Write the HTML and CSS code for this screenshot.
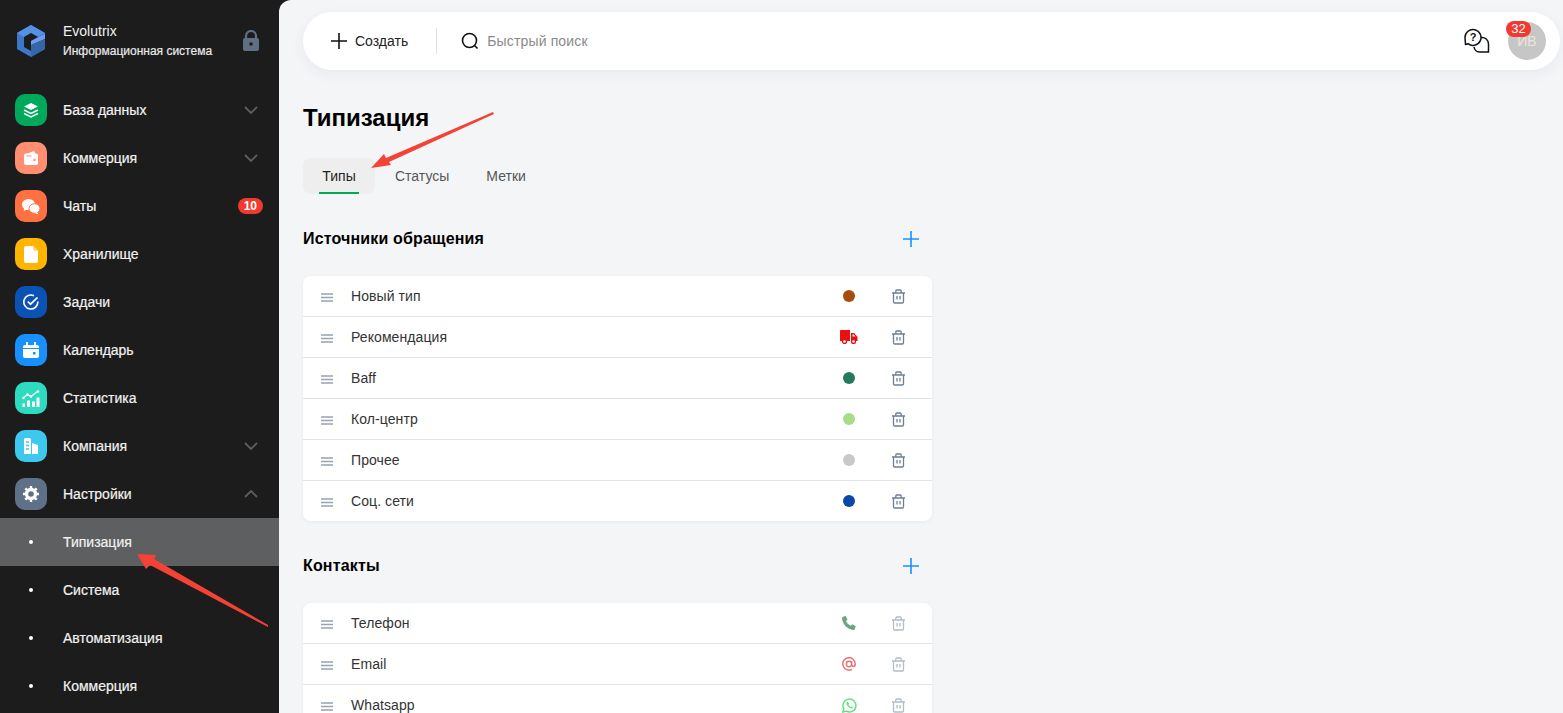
FILE: index.html
```html
<!DOCTYPE html>
<html lang="ru">
<head>
  <meta charset="UTF-8" />
  <meta name="viewport" content="width=device-width, initial-scale=1.0" />
  <title>Типизация</title>
  <link rel="stylesheet" href="styles.css">
</head>
<body>

<svg class="hidden-defs" width="0" height="0">
  <defs>
    <symbol id="i-drag" viewBox="0 0 12 9"><path d="M0 1h12M0 4.500h12M0 8h12" stroke="#98a2b3" stroke-width="1.3" fill="none"/></symbol>
    <symbol id="i-trash" viewBox="0 0 15 15"><path d="M1 4h13M2.500 4v8.800A1.200 1.200 0 0 0 3.700 14h7.600a1.200 1.200 0 0 0 1.200-1.200V4M4.800 4V2a1 1 0 0 1 1-1h3.400a1 1 0 0 1 1 1v2M6 7v3.500M9 7v3.500" stroke="currentColor" stroke-width="1.300" fill="none"/></symbol>
    <symbol id="i-plus" viewBox="0 0 16 16"><path d="M8 0v16M0 8h16" stroke="#1890ff" stroke-width="1.6" fill="none"/></symbol>
    <symbol id="i-down" viewBox="0 0 14 8"><path d="M1 1l6 6 6-6" stroke="#5e5e5e" stroke-width="1.800" fill="none"/></symbol>
  </defs>
</svg>

<div class="app">

  <!-- Sidebar -->
  <aside class="sidebar">
    <div class="brand">
      <svg class="brand-logo" width="30" height="34" viewBox="0 0 30 34">
        <path d="M15 1L29 9v16l-14 8L1 25V9z" fill="#3b78c9"/>
        <path d="M15 1L29 9 22 13 15 9 8 13 1 9z" fill="#5590e4"/>
        <path d="M8 13l7-4 7 4-7 4v4l14-7v5l-14 8-7-4z" fill="#1c1c1c"/>
        <path d="M15 17l14-7v5l-14 6z" fill="#6d9cf0"/>
        <path d="M15 21l14-6v10l-14 8z" fill="#3566a8"/>
      </svg>
      <div class="brand-text">
        <div class="brand-name">Evolutrix</div>
        <div class="brand-sub">Информационная система</div>
      </div>
      <svg class="brand-lock" width="18" height="22" viewBox="0 0 18 22">
        <path d="M4 9V6a5 5 0 0 1 10 0v3" stroke="#5f6f84" stroke-width="2.200" fill="none"/>
        <rect x="1" y="8" width="16" height="13" rx="2" fill="#5f6f84"/>
        <circle cx="9" cy="14" r="1.800" fill="#1c1c1c"/>
      </svg>
    </div>

    <nav class="menu">
      <div class="menu-item">
        <span class="menu-icon green">
          <svg width="16" height="16" viewBox="0 0 16 16"><path d="M8 1l7 3.500-7 3.500-7-3.500z" fill="#fff"/><path d="M1 8l7 3.500L15 8M1 11.500L8 15l7-3.500" stroke="#fff" stroke-width="1.500" fill="none"/></svg>
        </span>
        <span class="menu-label">База данных</span>
        <svg class="menu-arrow" width="14" height="8"><use href="#i-down"/></svg>
      </div>
      <div class="menu-item">
        <span class="menu-icon salmon">
          <svg width="16" height="16" viewBox="0 0 16 16"><path d="M1 5.500a2 2 0 0 1 2-2h10a2 2 0 0 1 2 2V13a2 2 0 0 1-2 2H3a2 2 0 0 1-2-2z" fill="#fff"/><path d="M3 4L11 1l1.500 3z" fill="#fff"/><path d="M3.500 6h5" stroke="#ff8f70" stroke-width="1"/><circle cx="11.500" cy="10" r="1.200" fill="#ff8f70"/></svg>
        </span>
        <span class="menu-label">Коммерция</span>
        <svg class="menu-arrow" width="14" height="8"><use href="#i-down"/></svg>
      </div>
      <div class="menu-item">
        <span class="menu-icon orange">
          <svg width="20" height="17" viewBox="0 0 20 17"><ellipse cx="7.500" cy="6.500" rx="6.500" ry="5.500" fill="#fff"/><path d="M3.500 10l-1 3 4-1.500z" fill="#fff"/><ellipse cx="13.500" cy="10.500" rx="5.500" ry="4.800" fill="#fff" stroke="#ff7043" stroke-width="1"/><path d="M16 14l1.500 2.500-4-1.500z" fill="#fff"/></svg>
        </span>
        <span class="menu-label">Чаты</span>
        <span class="menu-badge">10</span>
      </div>
      <div class="menu-item">
        <span class="menu-icon yellow">
          <svg width="14" height="17" viewBox="0 0 14 17"><path d="M2 0h7l5 5v10a2 2 0 0 1-2 2H2a2 2 0 0 1-2-2V2a2 2 0 0 1 2-2z" fill="#fff"/><path d="M9 0v3a2 2 0 0 0 2 2h3z" fill="#ffd98a"/></svg>
        </span>
        <span class="menu-label">Хранилище</span>
      </div>
      <div class="menu-item">
        <span class="menu-icon blue-dark">
          <svg width="16" height="16" viewBox="0 0 16 16"><path d="M14.800 7.500A7 7 0 1 1 11 1.800" stroke="#fff" stroke-width="1.600" fill="none"/><path d="M4.800 7.500l2.700 2.700L14.500 3.500" stroke="#fff" stroke-width="1.700" fill="none"/></svg>
        </span>
        <span class="menu-label">Задачи</span>
      </div>
      <div class="menu-item">
        <span class="menu-icon blue">
          <svg width="16" height="16" viewBox="0 0 16 16"><path d="M0 5a2 2 0 0 1 2-2h12a2 2 0 0 1 2 2v1H0zM0 7h16v7a2 2 0 0 1-2 2H2a2 2 0 0 1-2-2z" fill="#fff"/><path d="M4 0v3M12 0v3" stroke="#fff" stroke-width="1.800"/><rect x="10" y="10" width="2.500" height="2.500" fill="#1890ff"/></svg>
        </span>
        <span class="menu-label">Календарь</span>
      </div>
      <div class="menu-item">
        <span class="menu-icon teal">
          <svg width="18" height="17" viewBox="0 0 18 17"><path d="M1 8l4.500-3.500 3.500 2L16 1" stroke="#fff" stroke-width="1.100" fill="none"/><circle cx="5.500" cy="4.500" r="1.200" fill="#fff"/><circle cx="9" cy="6.500" r="1.200" fill="#fff"/><circle cx="16" cy="1.500" r="1.200" fill="#fff"/><circle cx="1.500" cy="8" r="1.200" fill="#fff"/><path d="M0.500 13.500h2.500V17H0.500zM5 10.500h3V17H5zM10 11.500h3V17h-3zM14.500 7.500H17.500V17h-3z" fill="#fff"/></svg>
        </span>
        <span class="menu-label">Статистика</span>
      </div>
      <div class="menu-item">
        <span class="menu-icon sky">
          <svg width="16" height="16" viewBox="0 0 16 16"><path d="M1 1.500A1.500 1.500 0 0 1 2.500 0h4A1.500 1.500 0 0 1 8 1.500V16H1z" fill="#fff"/><path d="M9 5l6 2v9H9z" fill="#fff"/><path d="M3 4h3M3 7.500h3M3 11h3" stroke="#3ec8ee" stroke-width="1.300"/></svg>
        </span>
        <span class="menu-label">Компания</span>
        <svg class="menu-arrow" width="14" height="8"><use href="#i-down"/></svg>
      </div>
      <div class="menu-item">
        <span class="menu-icon slate">
          <svg width="16" height="16" viewBox="0 0 16 16"><circle cx="8" cy="8" r="4.500" stroke="#fff" stroke-width="3.400" fill="none"/><path d="M8 0v3M8 13v3M0 8h3M13 8h3M2.300 2.300l2.100 2.100M11.600 11.600l2.100 2.100M2.300 13.700l2.100-2.100M11.600 4.400l2.100-2.100" stroke="#fff" stroke-width="2.400"/></svg>
        </span>
        <span class="menu-label">Настройки</span>
        <svg class="menu-arrow up" width="14" height="8"><use href="#i-down"/></svg>
      </div>

      <div class="menu-item sub active"><span class="sub-dot"></span><span class="menu-label">Типизация</span></div>
      <div class="menu-item sub"><span class="sub-dot"></span><span class="menu-label">Система</span></div>
      <div class="menu-item sub"><span class="sub-dot"></span><span class="menu-label">Автоматизация</span></div>
      <div class="menu-item sub"><span class="sub-dot"></span><span class="menu-label">Коммерция</span></div>
    </nav>
  </aside>

  <!-- Main -->
  <main class="main">
    <header class="topbar">
      <div class="create">
        <svg width="16" height="16" viewBox="0 0 16 16"><path d="M8 0v16M0 8h16" stroke="#111" stroke-width="1.600" fill="none"/></svg>
        <span>Создать</span>
      </div>
      <div class="search">
        <svg width="18" height="18" viewBox="0 0 18 18"><circle cx="8.500" cy="8.500" r="7" stroke="#111" stroke-width="1.600" fill="none"/><path d="M13.500 13.500l3 3" stroke="#111" stroke-width="1.600"/></svg>
        <span>Быстрый поиск</span>
      </div>
      <div class="top-right">
        <svg class="help" width="26" height="26" viewBox="0 0 26 26">
          <path d="M1 9.500a8 8 0 1 1 3 6.200L1.500 16.500z" stroke="#111" stroke-width="1.500" fill="none" stroke-linejoin="round"/>
          <path d="M17 9.500a6.500 6.500 0 0 1 7.500 6.500v8h-9a6 6 0 0 1-5.500-5" stroke="#111" stroke-width="1.500" fill="none"/>
          <text x="9" y="13" text-anchor="middle" class="help-mark">?</text>
        </svg>
        <div class="avatar">ИВ<span class="avatar-badge">32</span></div>
      </div>
    </header>

    <h1 class="page-title">Типизация</h1>

    <div class="tabs">
      <div class="tab active">Типы</div>
      <div class="tab">Статусы</div>
      <div class="tab">Метки</div>
    </div>

    <section class="group">
      <div class="group-head">
        <h2>Источники обращения</h2>
        <svg width="16" height="16"><use href="#i-plus"/></svg>
      </div>
      <div class="card">
        <div class="row">
          <svg class="drag" width="12" height="9"><use href="#i-drag"/></svg>
          <span class="row-name">Новый тип</span>
          <span class="row-mark"><span class="dot brown"></span></span>
          <svg class="trash" width="15" height="15"><use href="#i-trash"/></svg>
        </div>
        <div class="row">
          <svg class="drag" width="12" height="9"><use href="#i-drag"/></svg>
          <span class="row-name">Рекомендация</span>
          <span class="row-mark">
            <svg width="18" height="14" viewBox="0 0 18 14"><path d="M0 1a1 1 0 0 1 1-1h9v11H0zM11 3h3l3.500 4v4H11z" fill="#e81010"/><circle cx="4.500" cy="11.500" r="2" fill="#fff" stroke="#e81010" stroke-width="1.300"/><circle cx="13.500" cy="11.500" r="2" fill="#fff" stroke="#e81010" stroke-width="1.300"/><path d="M12.500 4.500h1.300l1.700 2h-3z" fill="#fff"/></svg>
          </span>
          <svg class="trash" width="15" height="15"><use href="#i-trash"/></svg>
        </div>
        <div class="row">
          <svg class="drag" width="12" height="9"><use href="#i-drag"/></svg>
          <span class="row-name">Baff</span>
          <span class="row-mark"><span class="dot pine"></span></span>
          <svg class="trash" width="15" height="15"><use href="#i-trash"/></svg>
        </div>
        <div class="row">
          <svg class="drag" width="12" height="9"><use href="#i-drag"/></svg>
          <span class="row-name">Кол-центр</span>
          <span class="row-mark"><span class="dot lime"></span></span>
          <svg class="trash" width="15" height="15"><use href="#i-trash"/></svg>
        </div>
        <div class="row">
          <svg class="drag" width="12" height="9"><use href="#i-drag"/></svg>
          <span class="row-name">Прочее</span>
          <span class="row-mark"><span class="dot grey"></span></span>
          <svg class="trash" width="15" height="15"><use href="#i-trash"/></svg>
        </div>
        <div class="row">
          <svg class="drag" width="12" height="9"><use href="#i-drag"/></svg>
          <span class="row-name">Соц. сети</span>
          <span class="row-mark"><span class="dot navy"></span></span>
          <svg class="trash" width="15" height="15"><use href="#i-trash"/></svg>
        </div>
      </div>
    </section>

    <section class="group">
      <div class="group-head">
        <h2>Контакты</h2>
        <svg width="16" height="16"><use href="#i-plus"/></svg>
      </div>
      <div class="card">
        <div class="row">
          <svg class="drag" width="12" height="9"><use href="#i-drag"/></svg>
          <span class="row-name">Телефон</span>
          <span class="row-mark">
            <svg width="14" height="14" viewBox="0 0 14 14"><path d="M1 .8L3.500 0l2 3.500L4 5c.8 2 2.500 3.700 4.700 4.800l1.500-1.500 3.500 2-.8 2.700c-.3.700-1 1-1.700 1C5.500 13.500.5 8 0 2.500 0 1.800.4 1.100 1 .8z" fill="#6aa583"/></svg>
          </span>
          <svg class="trash off" width="15" height="15"><use href="#i-trash"/></svg>
        </div>
        <div class="row">
          <svg class="drag" width="12" height="9"><use href="#i-drag"/></svg>
          <span class="row-name">Email</span>
          <span class="row-mark">
            <svg width="14" height="14" viewBox="0 0 14 14"><path d="M10 12.300A6.200 6.200 0 1 1 13.200 7c0 1.500-.7 2.500-1.800 2.500S9.700 8.500 9.700 7.300V4.300M9.700 7A2.700 2.700 0 1 1 4.300 7a2.700 2.700 0 0 1 5.400 0z" stroke="#e57373" stroke-width="1.500" fill="none"/></svg>
          </span>
          <svg class="trash off" width="15" height="15"><use href="#i-trash"/></svg>
        </div>
        <div class="row">
          <svg class="drag" width="12" height="9"><use href="#i-drag"/></svg>
          <span class="row-name">Whatsapp</span>
          <span class="row-mark">
            <svg width="15" height="15" viewBox="0 0 15 15"><path d="M.8 14.200l1-3.500a6.500 6.500 0 1 1 2.500 2.500z" stroke="#5fe07a" stroke-width="1.400" fill="none" stroke-linejoin="round"/><path d="M5 4c-.8.800-.7 2 .3 3.400 1 1.500 2.500 2.700 3.700 2.900 1 .1 1.700-.4 1.900-1.200L9.500 8.200l-.8.700C7.800 8.500 6.900 7.600 6.400 6.600l.7-.8L6.200 4z" fill="#5fe07a"/></svg>
          </span>
          <svg class="trash off" width="15" height="15"><use href="#i-trash"/></svg>
        </div>
      </div>
    </section>
  </main>
</div>

<!-- Red annotation arrows drawn over the screenshot -->
<svg class="arrow-menu" width="140" height="90" viewBox="0 0 140 90">
  <path d="M1 2L20 3 18 7 132 73 132 75 14 13 10 17z" fill="#f44336"/>
</svg>
<svg class="arrow-tab" width="130" height="60" viewBox="0 0 130 60">
  <path d="M3 56L16 42 18 46 125 0 126 2 21 50 23 53z" fill="#f44336"/>
</svg>

</body>
</html>
```

FILE: styles.css
```css
html, body {
  margin: 0;
  padding: 0;
  height: 100%;
  overflow: hidden;
  font-family: 'Liberation Sans', Arial, sans-serif;
  background-color: #1c1c1c;
}

.hidden-defs { position: absolute; }

.app {
  display: flex;
  height: 100vh;
}

/* Sidebar */
.sidebar {
  width: 279px;
  flex-shrink: 0;
  background-color: #1c1c1c;
  color: #fff;
}

.brand {
  display: flex;
  align-items: center;
  height: 86px;
  padding: 0 19px 4px 16px;
  box-sizing: border-box;
}

.brand-logo { flex-shrink: 0; }

.brand-text {
  flex: 1;
  margin-left: 17px;
}

.brand-name {
  font-size: 14px;
  line-height: 20px;
  color: #f2f2f2;
}

.brand-sub {
  font-size: 12px;
  line-height: 20px;
  color: #e9e9e9;
  -webkit-text-stroke: 0.2px #e9e9e9;
}

.menu-item {
  display: flex;
  align-items: center;
  height: 48px;
  padding: 0 16px 0 15px;
  font-size: 14px;
  color: #f2f2f2;
}

.menu-label {
  flex: 1;
  margin-left: 16px;
  -webkit-text-stroke: 0.2px #f2f2f2;
}

.menu-icon {
  width: 32px;
  height: 32px;
  border-radius: 10px;
  display: flex;
  align-items: center;
  justify-content: center;
  flex-shrink: 0;
}

.green { background-color: #00a85a; }
.salmon { background-color: #ff8f70; }
.orange { background-color: #ff7043; }
.yellow { background-color: #ffb400; }
.blue-dark { background-color: #0b52b5; }
.blue { background-color: #1890ff; }
.teal { background-color: #2ddcc0; }
.sky { background-color: #3ec8ee; }
.slate { background-color: #5f7186; }

.menu-arrow { margin-right: 5px; }
.menu-arrow.up { transform: rotate(180deg); }

.menu-badge {
  background-color: #f1392f;
  color: #fff;
  font-size: 12px;
  font-weight: bold;
  line-height: 16px;
  padding: 0 6px;
  border-radius: 8px;
}

.sub .menu-label { margin-left: 30px; }

.sub-dot {
  width: 4px;
  height: 4px;
  margin-left: 14px;
  border-radius: 50%;
  background-color: #fff;
}

.menu-item.active { background-color: #5e5f60; }

/* Main */
.main {
  flex: 1;
  min-width: 0;
  background-color: #f4f5f7;
  border-top-left-radius: 12px;
  padding: 12px 3px 0 24px;
}

.topbar {
  display: flex;
  align-items: center;
  height: 58px;
  background-color: #fff;
  border-radius: 29px;
  box-shadow: 0 4px 14px rgba(30, 50, 90, 0.06);
}

.create {
  display: flex;
  align-items: center;
  gap: 8px;
  height: 26px;
  padding: 0 28px;
  font-size: 14px;
  color: #222;
  border-right: 1px solid #dfe1e5;
}

.search {
  display: flex;
  align-items: center;
  gap: 8px;
  margin-left: 24px;
  flex: 1;
  font-size: 14px;
  letter-spacing: 0.15px;
  color: #8a8a8a;
}

.top-right {
  display: flex;
  align-items: center;
  gap: 18px;
  padding-right: 14px;
}

.help-mark {
  font-size: 11px;
  font-weight: bold;
  fill: #111;
  font-family: 'Liberation Sans', sans-serif;
}

.avatar {
  position: relative;
  width: 38px;
  height: 38px;
  border-radius: 50%;
  background-color: #c6c6c6;
  color: #e9e6d8;
  font-size: 14px;
  line-height: 38px;
  text-align: center;
}

.avatar-badge {
  position: absolute;
  top: -1px;
  left: -2px;
  width: 25px;
  height: 16px;
  border-radius: 8px;
  background-color: #f1392f;
  color: #fff;
  font-size: 13px;
  line-height: 16px;
  text-align: center;
}

.page-title {
  margin: 34px 0 0;
  font-size: 24px;
  line-height: 28px;
  font-weight: bold;
  color: #000;
}

.tabs {
  display: flex;
  gap: 1px;
  margin-top: 26px;
}

.tab {
  position: relative;
  height: 36px;
  padding: 0 18px;
  font-size: 14px;
  line-height: 36px;
  color: #555;
  border-radius: 8px;
}

.tab.active {
  width: 72px;
  margin-right: 1px;
  padding: 0;
  text-align: center;
  color: #222;
  background-color: #eeeeee;
}

.tab.active::after {
  content: "";
  position: absolute;
  left: 16px;
  right: 16px;
  bottom: 0;
  height: 2px;
  background-color: #00a85a;
}

.group {
  width: 629px;
  margin-top: 27px;
}

.group-head {
  display: flex;
  align-items: center;
  justify-content: space-between;
  height: 36px;
  padding-right: 13px;
  margin-bottom: 19px;
}

.group-head h2 {
  margin: 0;
  font-size: 16px;
  font-weight: bold;
  letter-spacing: 0.16px;
  color: #000;
}

.card {
  background-color: #fff;
  border-radius: 8px;
  box-shadow: 0 1px 4px rgba(30, 50, 90, 0.06);
}

.row {
  display: flex;
  align-items: center;
  height: 41px;
  box-sizing: border-box;
  padding: 0 26px 0 18px;
  border-bottom: 1px solid #e2e3e5;
  font-size: 14px;
  color: #333;
}

.row:last-child {
  height: 40px;
  border-bottom: none;
}

.drag { margin-top: 2px; }

.row-name {
  flex: 1;
  margin-left: 18px;
  letter-spacing: 0.08px;
}

.row-mark {
  width: 20px;
  display: flex;
  justify-content: center;
  margin-right: 32px;
}

.dot {
  width: 12px;
  height: 12px;
  border-radius: 50%;
}

.brown { background-color: #a84c0c; }
.pine { background-color: #237a5e; }
.lime { background-color: #a5dd8a; }
.grey { background-color: #c9c9c9; }
.navy { background-color: #0a47a9; }

.trash { color: #6f7f92; }
.trash.off { color: #b4bcc7; }

/* Annotation arrows */
.arrow-menu {
  position: absolute;
  left: 136px;
  top: 552px;
}

.arrow-tab {
  position: absolute;
  left: 368px;
  top: 112px;
}
```
